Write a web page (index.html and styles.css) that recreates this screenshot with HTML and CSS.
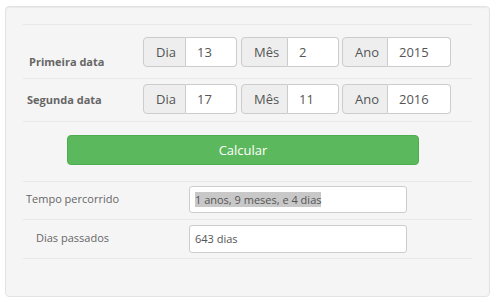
FILE: index.html
```html
<!DOCTYPE html>
<html lang="pt">
<head>
    <meta charset="UTF-8">
    <title>Calcular tempo entre datas</title>
    <link rel="stylesheet" href="styles.css">
</head>
<body>
    <div class="well">
        <div class="row row-first">
            <label class="date-label label-first">Primeira data</label>
            <div class="groups">
                <div class="input-group"><span class="addon addon-dia">Dia</span><input class="num num-dia" type="text" value="13"></div>
                <div class="input-group"><span class="addon addon-mes">Mês</span><input class="num num-mes" type="text" value="2"></div>
                <div class="input-group"><span class="addon addon-ano">Ano</span><input class="num num-ano" type="text" value="2015"></div>
            </div>
        </div>
        <div class="row row-second">
            <label class="date-label label-second">Segunda data</label>
            <div class="groups">
                <div class="input-group"><span class="addon addon-dia">Dia</span><input class="num num-dia" type="text" value="17"></div>
                <div class="input-group"><span class="addon addon-mes">Mês</span><input class="num num-mes" type="text" value="11"></div>
                <div class="input-group"><span class="addon addon-ano">Ano</span><input class="num num-ano" type="text" value="2016"></div>
            </div>
        </div>
        <div class="row row-button">
            <button type="button" class="btn">Calcular</button>
        </div>
        <div class="row row-result">
            <span class="result-label">Tempo percorrido</span>
            <div class="field field-tempo"><span class="selected">1 anos, 9 meses, e 4 dias</span></div>
        </div>
        <div class="row row-result row-last">
            <span class="result-label">Dias passados</span>
            <div class="field field-dias">643 dias</div>
        </div>
    </div>
</body>
</html>
```

FILE: styles.css
```css
body {
    margin: 0;
    font-family: "Open Sans", sans-serif;
    background-color: #fff;
    color: #555;
}
.well {
    margin: 6px 0 0 5px;
    width: 485px;
    height: 291px;
    box-sizing: border-box;
    padding: 17px 17px 0 17px;
    background-color: #f5f5f5;
    border: 1px solid #e3e3e3;
    border-radius: 4px;
    box-shadow: inset 0 1px 1px rgba(0, 0, 0, 0.05);
}
.row {
    display: flex;
    align-items: flex-start;
    box-sizing: border-box;
    border-top: 1px solid #e8e8e8;
}
.row-last {
    border-bottom: 1px solid #e8e8e8;
}
.row-first {
    height: 54px;
    padding-top: 12px;
}
.row-second {
    height: 43px;
    padding-top: 5px;
}
.row-button {
    height: 60px;
    padding-top: 13px;
}
.row-result {
    height: 38px;
    padding-top: 4px;
}
.row-result.row-last {
    height: 40px;
    padding-top: 5px;
}
.date-label {
    font-size: 11px;
    font-weight: bold;
    line-height: 16px;
    color: #666;
}
.label-first {
    margin: 17px 0 0 6px;
    width: 114px;
}
.label-second {
    margin: 8px 0 0 4px;
    width: 116px;
}
.groups {
    display: flex;
    gap: 4px;
}
.groups .input-group:last-child {
    margin-left: -1px;
}
.input-group {
    display: flex;
    height: 30px;
}
.addon {
    box-sizing: border-box;
    height: 30px;
    padding: 0 12px;
    line-height: 28px;
    font-size: 13px;
    color: #555;
    background-color: #eee;
    border: 1px solid #ccc;
    border-radius: 4px 0 0 4px;
}
.addon-dia { width: 43px; }
.addon-mes { width: 47px; }
.addon-ano { width: 46px; }
.num {
    box-sizing: border-box;
    height: 30px;
    margin: 0;
    padding: 0 11px;
    font-family: "Open Sans", sans-serif;
    font-size: 13px;
    color: #555;
    background-color: #fff;
    border: 1px solid #ccc;
    border-left: none;
    border-radius: 0 4px 4px 0;
    outline: none;
}
.num-dia, .num-mes { width: 51px; }
.num-ano { width: 63px; }
.btn {
    margin-left: 44px;
    width: 352px;
    height: 30px;
    font-family: "Open Sans", sans-serif;
    font-size: 13px;
    color: #fff;
    background-color: #5cb85c;
    border: 1px solid #4cae4c;
    border-radius: 4px;
    cursor: pointer;
}
.result-label {
    width: 99px;
    margin-top: 5px;
    text-align: center;
    font-size: 11px;
    line-height: 16px;
    color: #666;
}
.field {
    box-sizing: border-box;
    margin-left: 67px;
    width: 218px;
    height: 27px;
    padding: 0 5px;
    line-height: 25px;
    font-size: 11px;
    color: #555;
    background-color: #fff;
    border: 1px solid #ccc;
    border-radius: 3px;
}
.field-dias {
    height: 28px;
    line-height: 26px;
}
.selected {
    background-color: #c8c8c8;
}
```
